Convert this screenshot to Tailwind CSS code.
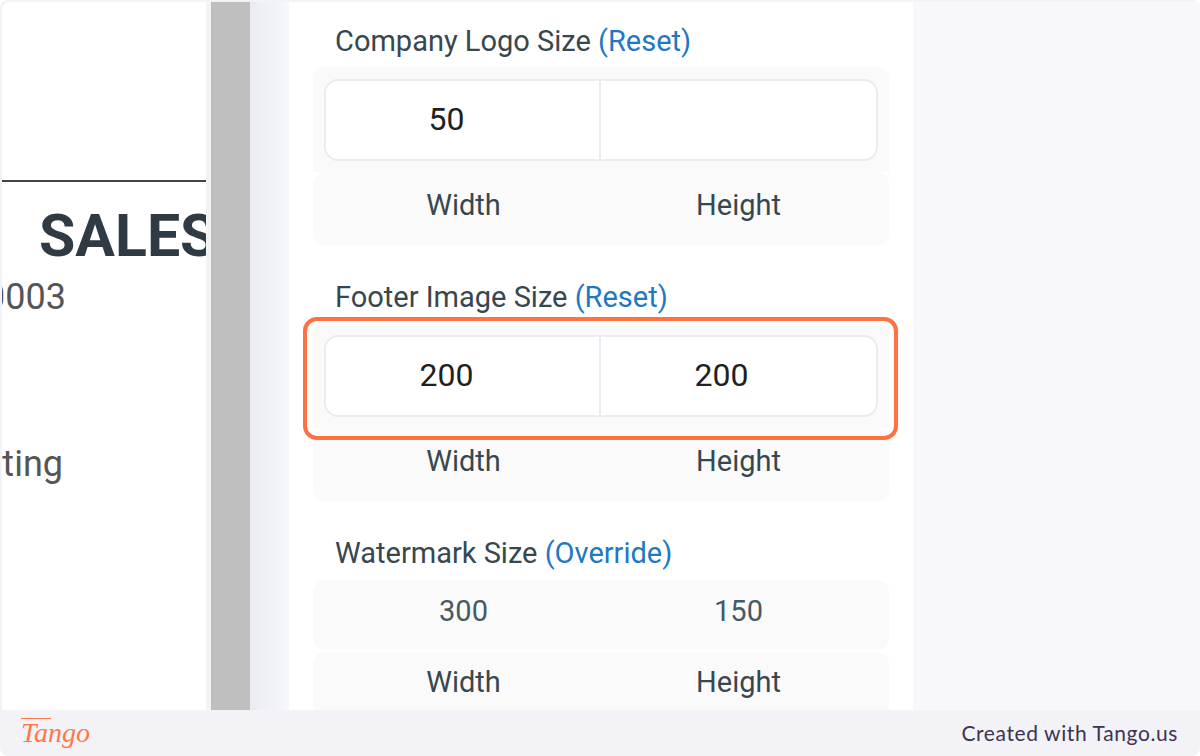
<!DOCTYPE html>
<html lang="en">
<head>
    <meta charset="UTF-8">
    <title>Footer Image Size</title>
    <script src="https://cdn.jsdelivr.net/npm/@tailwindcss/browser@4"></script>
</head>
<body class="bg-white font-['Roboto',sans-serif] overflow-hidden">
    <div class="relative w-[1200px] h-[756px] flex flex-col overflow-hidden bg-[#f3f2f7] rounded-lg">
        <!-- Main -->
        <div class="flex h-[710px] pt-[2px] pl-[2px] overflow-hidden">
            <!-- Document preview -->
            <div class="w-[204px] shrink-0 bg-white rounded-tl-lg overflow-hidden whitespace-nowrap">
                <div class="h-[180px] border-b-2 border-[#444]"></div>
                <div class="mt-[19px] ml-[37px] text-[59px] leading-[70px] font-bold text-[#2f3a44]">SALES ORDER</div>
                <div class="-ml-[2px] mt-[4px] flex justify-end w-[66px] text-[36px] leading-[44px] text-[#555]">0003</div>
                <div class="-ml-[2px] mt-[123px] flex justify-end w-[63px] text-[36px] leading-[44px] text-[#555]">ting</div>
            </div>
            <!-- Scrollbar -->
            <div class="w-[5px] shrink-0 bg-[#f4f4f4]"></div>
            <div class="w-[39px] shrink-0 bg-[#bfbfbf]"></div>
            <div class="w-[39px] shrink-0 bg-gradient-to-r from-[#ebecf1] to-[#f6f7fb]"></div>
            <!-- Settings panel -->
            <div class="w-[624px] shrink-0 bg-white px-6 overflow-hidden">
                <h3 class="ml-[22px] pt-[20px] text-[29px] leading-[38px] font-normal text-[#37474f]">Company Logo Size <span class="text-[#1f78c1]">(Reset)</span></h3>
                <div class="mt-[7px] h-[105px] bg-[#fafafa] rounded-t-xl px-[11px] pt-[12px]">
                    <div class="grid grid-cols-2 h-[82px] bg-white border-2 border-[#e9edf2] rounded-[14px] text-[32px] text-[#212121]">
                        <div class="flex items-center justify-center border-r-2 border-[#e9edf2] pr-[32px] pb-[3px]">50</div>
                        <div class="flex items-center justify-center pr-[34px] pb-[3px]"></div>
                    </div>
                </div>
                <div class="grid grid-cols-2 h-[73px] bg-[#fafafa] rounded-xl px-[13px] pt-[14px] text-[29px] leading-[38px] text-[#37474f]">
                    <div class="text-center">Width</div>
                    <div class="text-center">Height</div>
                </div>

                <h3 class="ml-[22px] mt-[33px] text-[29px] leading-[38px] font-normal text-[#37474f]">Footer Image Size <span class="text-[#1f78c1]">(Reset)</span></h3>
                <div class="mt-[7px] h-[105px] bg-[#fafafa] rounded-t-xl px-[11px] pt-[12px]">
                    <div class="grid grid-cols-2 h-[82px] bg-white border-2 border-[#e9edf2] rounded-[14px] text-[32px] text-[#212121]">
                        <div class="flex items-center justify-center border-r-2 border-[#e9edf2] pr-[32px] pb-[3px]">200</div>
                        <div class="flex items-center justify-center pr-[34px] pb-[3px]">200</div>
                    </div>
                </div>
                <div class="grid grid-cols-2 h-[73px] bg-[#fafafa] rounded-xl px-[13px] pt-[14px] text-[29px] leading-[38px] text-[#37474f]">
                    <div class="text-center">Width</div>
                    <div class="text-center">Height</div>
                </div>

                <h3 class="ml-[22px] mt-[33px] text-[29px] leading-[38px] font-normal text-[#37474f]">Watermark Size <span class="text-[#1f78c1]">(Override)</span></h3>
                <div class="mt-[8px] grid grid-cols-2 h-[70px] bg-[#fafafa] rounded-xl px-[13px] pt-[12px] text-[29px] leading-[38px] text-[#455a64]">
                    <div class="text-center">300</div>
                    <div class="text-center">150</div>
                </div>
                <div class="mt-[2px] grid grid-cols-2 h-[73px] bg-[#fafafa] rounded-xl px-[13px] pt-[11px] text-[29px] leading-[38px] text-[#37474f]">
                    <div class="text-center">Width</div>
                    <div class="text-center">Height</div>
                </div>
            </div>
            <div class="flex-1 bg-[#f8f8fc]"></div>
        </div>

        <!-- Highlight -->
        <div class="absolute left-[303px] top-[317px] w-[595px] h-[123px] border-4 border-[#ff7043] rounded-[14px]"></div>

        <!-- Footer -->
        <div class="flex-1 flex items-center justify-between pl-[21px] pr-[22px]">
            <span class="relative font-['Liberation_Serif',serif] italic text-[28px] leading-none text-[#ff7849] font-normal">
                <span class="absolute left-0 -top-[1px] w-[30px] h-px bg-[#ff7849]"></span>Tango
            </span>
            <span class="font-['Lato',sans-serif] text-[21px] tracking-[0.6px] text-[#3d3450]">Created with Tango.us</span>
        </div>
    </div>
</body>
</html>
